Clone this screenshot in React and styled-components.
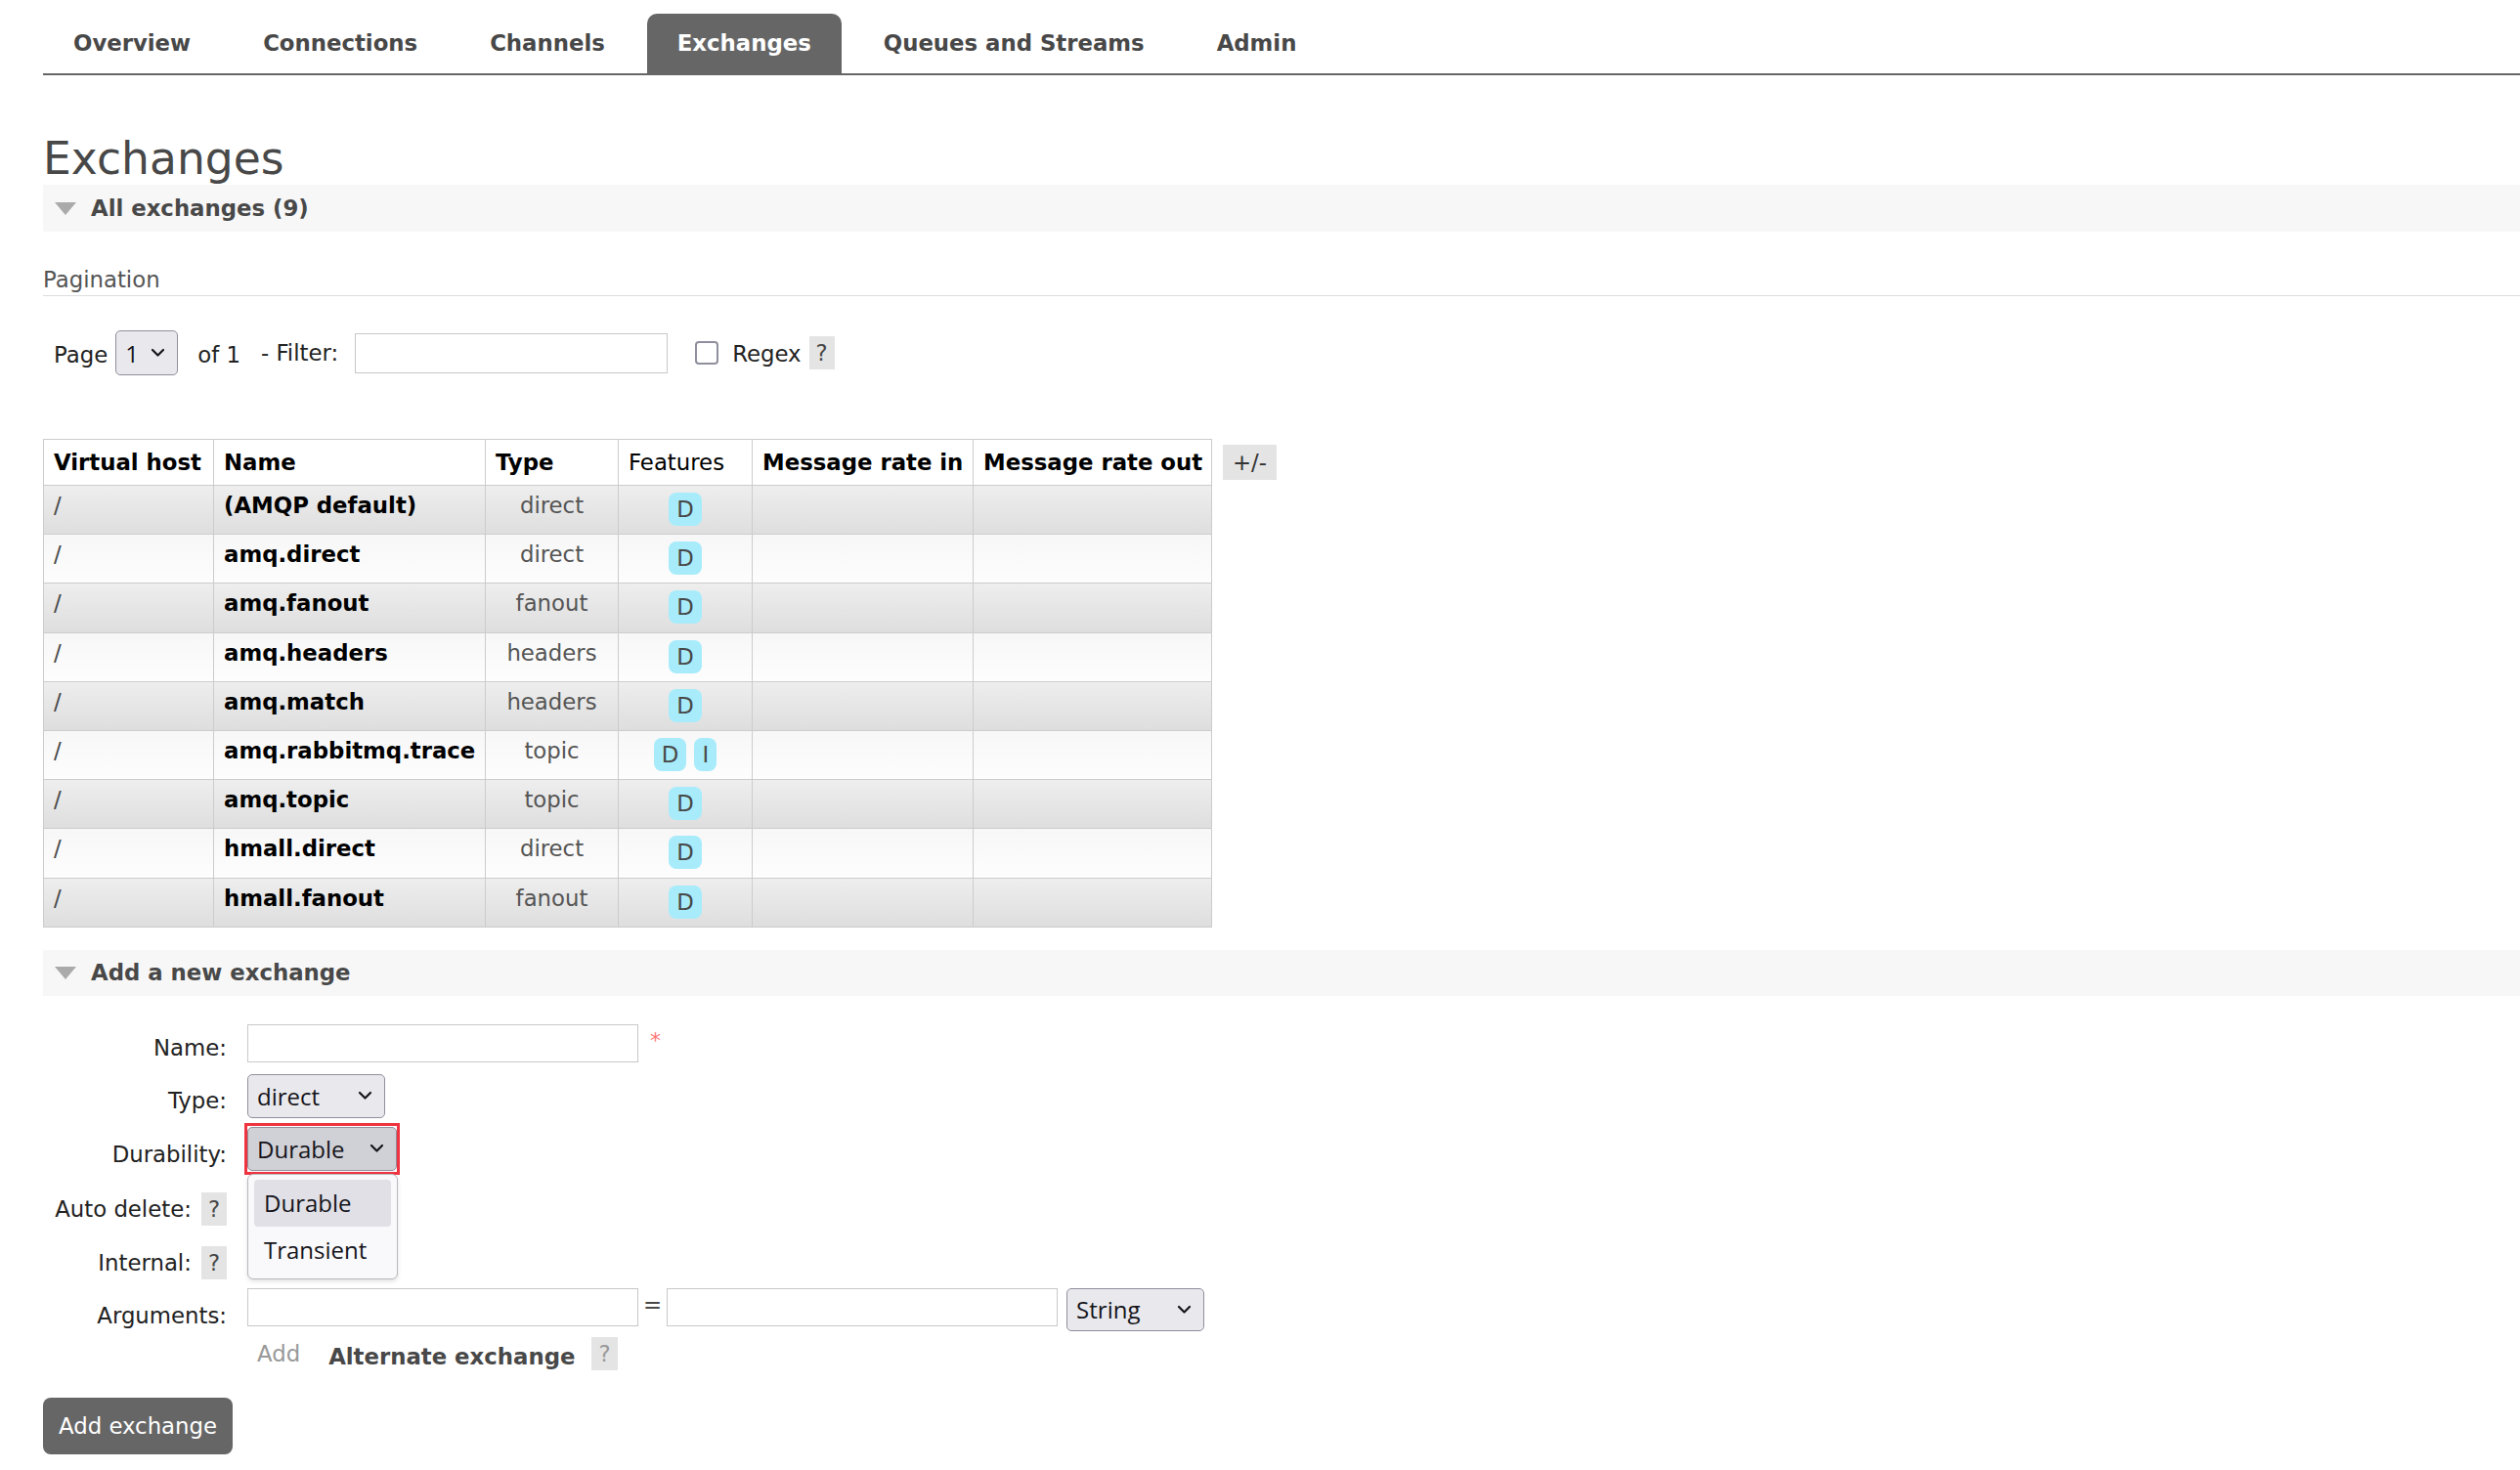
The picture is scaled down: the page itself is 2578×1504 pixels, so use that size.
import React from "react";
import styled, { createGlobalStyle } from "styled-components";

const GlobalStyle = createGlobalStyle`
  * { box-sizing: border-box; }
  body {
    margin: 0;
    background: #fff;
    font-family: "DejaVu Sans", Verdana, sans-serif;
    font-size: 22.8px;
    color: #484848;
  }
`;

const Page = styled.div`
  padding: 0 0 40px 44px;
`;

const Nav = styled.ul`
  display: flex;
  gap: 12px;
  margin: 0;
  padding: 14px 0 0 0;
  list-style: none;
  border-bottom: 2px solid #666;
`;

const Tab = styled.li`
  height: 61px;
  line-height: 61px;
  padding: 0 31px;
  font-weight: bold;
  color: ${(p) => (p.$active ? "#fff" : "#484848")};
  background: ${(p) => (p.$active ? "#666" : "transparent")};
  border-radius: 10px 10px 0 0;
`;

const Title = styled.h1`
  margin: 60px 0 0;
  font-size: 45.6px;
  line-height: 52px;
  font-weight: normal;
  color: #484848;
`;

const SectionBar = styled.div`
  display: flex;
  align-items: center;
  height: ${(p) => p.$h}px;
  margin-top: ${(p) => p.$top || 0}px;
  padding-left: 12px;
  background: #f7f7f7;
  font-weight: bold;
  color: #484848;
`;

const Triangle = styled.span`
  width: 0;
  height: 0;
  margin-right: 15px;
  border-left: 11px solid transparent;
  border-right: 11px solid transparent;
  border-top: 13px solid #aaa;
`;

const SubHeading = styled.h3`
  margin: 36px 0 0;
  padding-bottom: 3px;
  font-size: 22.8px;
  font-weight: normal;
  color: #555;
  border-bottom: 1px solid #ddd;
`;

const PagerRow = styled.div`
  display: flex;
  align-items: center;
  height: 46px;
  margin-top: 35px;
  padding-left: 11px;
`;

const PagerText = styled.span`
  margin-right: ${(p) => p.$mr || 0}px;
  padding-top: ${(p) => p.$pt || 0}px;
  color: #222;
`;

const SelectBox = styled.div`
  display: flex;
  align-items: center;
  justify-content: space-between;
  width: ${(p) => p.$w}px;
  height: ${(p) => p.$h}px;
  padding: 0 12px 0 9px;
  font-family: "Open Sans", "Noto Sans", sans-serif;
  font-size: 24px;
  color: #15141a;
  background: ${(p) => (p.$pressed ? "#d0d0d7" : "#e9e9ed")};
  border: 1px solid #8f8f9d;
  border-radius: 5px;
  margin-right: ${(p) => p.$mr || 0}px;
`;

const FocusRing = styled.div`
  margin: -4px -3px;
  padding: 1px 0;
  border: 3px solid #ef3340;
`;

const TextInput = styled.div`
  width: ${(p) => p.$w}px;
  height: ${(p) => p.$h}px;
  background: #fff;
  border: 1px solid #c8c8c8;
  margin-right: ${(p) => p.$mr || 0}px;
`;

const Checkbox = styled.span`
  width: 24px;
  height: 24px;
  margin-right: 14px;
  border: 2px solid #8f8f9d;
  border-radius: 4px;
  background: #fff;
`;

const HelpBox = styled.span`
  display: inline-block;
  padding: 3px 7px;
  line-height: 28px;
  background: #e4e4e4;
  color: ${(p) => (p.$muted ? "#999" : "#484848")};
  margin-left: ${(p) => p.$ml || 0}px;
`;

const TableRow = styled.div`
  display: flex;
  align-items: flex-start;
  gap: 11px;
  margin-top: 65px;
`;

const List = styled.table`
  width: 1195px;
  table-layout: fixed;
  border-collapse: collapse;
  border: 1px solid #ccc;
`;

const Th = styled.th`
  width: ${(p) => p.$w}px;
  height: 47px;
  padding: 6px 10px;
  text-align: left;
  font-weight: ${(p) => (p.$light ? "normal" : "bold")};
  color: #000;
  background: #fff;
  border: 1px solid #ccc;
  white-space: nowrap;
`;

const Tr = styled.tr`
  background: ${(p) =>
    p.$alt
      ? "linear-gradient(#eee, #dedede)"
      : "linear-gradient(#f7f7f7, #fdfdfd)"};
`;

const Td = styled.td`
  height: 50.2px;
  padding: 7px 10px 8px;
  vertical-align: top;
  border: 1px solid #ccc;
  text-align: ${(p) => (p.$center ? "center" : "left")};
  font-weight: ${(p) => (p.$bold ? "bold" : "normal")};
  color: ${(p) => p.$color || "#484848"};
  white-space: nowrap;
`;

const Badge = styled.span`
  display: inline-block;
  padding: 4px 8px;
  margin: 0 4px;
  line-height: 26px;
  border-radius: 8px;
  background: #a8ecfb;
  color: #484848;
`;

const ToggleButton = styled.span`
  margin-top: 6px;
  height: 36px;
  line-height: 36px;
  padding: 0 10px;
  background: #e4e4e4;
  color: #333;
`;

const Form = styled.div`
  margin-top: 29px;
`;

const FormRow = styled.div`
  display: grid;
  grid-template-columns: 188px auto;
  column-gap: 21px;
  align-items: start;
  height: ${(p) => p.$h}px;
`;

const Label = styled.div`
  padding-top: ${(p) => p.$pt || 14}px;
  text-align: right;
  white-space: nowrap;
  color: #222;
`;

const Control = styled.div`
  position: relative;
  display: flex;
  align-items: flex-start;
`;

const Required = styled.span`
  margin: 4px 0 0 12px;
  color: #f77;
  font-size: 22px;
`;

const Equals = styled.span`
  margin: 4px 5px 0 5px;
  color: #484848;
`;

const Menu = styled.div`
  position: absolute;
  top: 48px;
  left: 0;
  z-index: 2;
  width: 154px;
  padding: 5px 6px;
  background: #f9f9fb;
  border: 1px solid #b8b8c0;
  border-radius: 6px;
  box-shadow: 0 2px 4px rgba(0, 0, 0, 0.12);
  font-family: "Open Sans", "Noto Sans", sans-serif;
  font-size: 24px;
  color: #15141a;
`;

const MenuItem = styled.div`
  height: 48px;
  line-height: 48px;
  padding-left: 10px;
  border-radius: 4px;
  background: ${(p) => (p.$hover ? "#e0e0e6" : "transparent")};
`;

const AddLink = styled.span`
  padding: 4px 0 0 10px;
  margin-right: 29px;
  color: #999;
`;

const Strong = styled.span`
  padding-top: 7px;
  font-weight: bold;
  color: #484848;
`;

const Button = styled.div`
  display: inline-block;
  height: 58px;
  line-height: 58px;
  padding: 0 16px;
  border-radius: 8px;
  background: #666;
  color: #fff;
`;

const Chevron = () => (
  <svg width="15" height="10" viewBox="0 0 15 10">
    <polyline
      points="2,2 7.5,7.5 13,2"
      fill="none"
      stroke="#15141a"
      strokeWidth="2.2"
      strokeLinecap="round"
      strokeLinejoin="round"
    />
  </svg>
);

const tabs = ["Overview", "Connections", "Channels", "Exchanges", "Queues and Streams", "Admin"];

const exchanges = [
  ["(AMQP default)", "direct", ["D"]],
  ["amq.direct", "direct", ["D"]],
  ["amq.fanout", "fanout", ["D"]],
  ["amq.headers", "headers", ["D"]],
  ["amq.match", "headers", ["D"]],
  ["amq.rabbitmq.trace", "topic", ["D", "I"]],
  ["amq.topic", "topic", ["D"]],
  ["hmall.direct", "direct", ["D"]],
  ["hmall.fanout", "fanout", ["D"]],
];

export default function App() {
  return (
    <Page>
      <GlobalStyle />
      <Nav>
        {tabs.map((t) => (
          <Tab key={t} $active={t === "Exchanges"}>{t}</Tab>
        ))}
      </Nav>

      <Title>Exchanges</Title>
      <SectionBar $h={48}>
        <Triangle />
        All exchanges (9)
      </SectionBar>

      <SubHeading>Pagination</SubHeading>
      <PagerRow>
        <PagerText $mr={8} $pt={4}>Page</PagerText>
        <SelectBox $w={64} $h={46} $mr={20}>
          1 <Chevron />
        </SelectBox>
        <PagerText $mr={21} $pt={4}>of 1</PagerText>
        <PagerText $mr={17}>- Filter:</PagerText>
        <TextInput $w={320} $h={41} $mr={28} />
        <Checkbox />
        <PagerText $mr={8} $pt={2}>Regex</PagerText>
        <HelpBox>?</HelpBox>
      </PagerRow>

      <TableRow>
        <List>
          <thead>
            <tr>
              <Th $w={174}>Virtual host</Th>
              <Th $w={278}>Name</Th>
              <Th $w={136}>Type</Th>
              <Th $w={137} $light>Features</Th>
              <Th $w={226}>Message rate in</Th>
              <Th $w={244}>Message rate out</Th>
            </tr>
          </thead>
          <tbody>
            {exchanges.map(([name, type, features], i) => (
              <Tr key={name} $alt={i % 2 === 0}>
                <Td>/</Td>
                <Td $bold $color="#000">{name}</Td>
                <Td $center $color="#555">{type}</Td>
                <Td $center>
                  {features.map((f) => (
                    <Badge key={f}>{f}</Badge>
                  ))}
                </Td>
                <Td />
                <Td />
              </Tr>
            ))}
          </tbody>
        </List>
        <ToggleButton>+/-</ToggleButton>
      </TableRow>

      <SectionBar $h={47} $top={23}>
        <Triangle />
        Add a new exchange
      </SectionBar>

      <Form>
        <FormRow $h={51}>
          <Label $pt={11}>Name:</Label>
          <Control>
            <TextInput $w={400} $h={39} />
            <Required>*</Required>
          </Control>
        </FormRow>
        <FormRow $h={54}>
          <Label>Type:</Label>
          <Control>
            <SelectBox $w={141} $h={45}>
              direct <Chevron />
            </SelectBox>
          </Control>
        </FormRow>
        <FormRow $h={57}>
          <Label $pt={15}>Durability:</Label>
          <Control>
            <FocusRing>
              <SelectBox $w={153} $h={45} $pressed>
                Durable <Chevron />
              </SelectBox>
            </FocusRing>
            <Menu>
              <MenuItem $hover>Durable</MenuItem>
              <MenuItem>Transient</MenuItem>
            </Menu>
          </Control>
        </FormRow>
        <FormRow $h={55}>
          <Label $pt={10}>
            Auto delete:<HelpBox $ml={10}>?</HelpBox>
          </Label>
          <Control />
        </FormRow>
        <FormRow $h={53}>
          <Label $pt={10}>
            Internal:<HelpBox $ml={10}>?</HelpBox>
          </Label>
          <Control />
        </FormRow>
        <FormRow $h={50}>
          <Label $pt={15}>Arguments:</Label>
          <Control>
            <TextInput $w={400} $h={39} />
            <Equals>=</Equals>
            <TextInput $w={400} $h={39} $mr={9} />
            <SelectBox $w={141} $h={44}>
              String <Chevron />
            </SelectBox>
          </Control>
        </FormRow>
        <FormRow $h={62}>
          <Label />
          <Control>
            <AddLink>Add</AddLink>
            <Strong>Alternate exchange</Strong>
            <HelpBox $muted $ml={17}>?</HelpBox>
          </Control>
        </FormRow>
      </Form>
      <Button>Add exchange</Button>
    </Page>
  );
}
